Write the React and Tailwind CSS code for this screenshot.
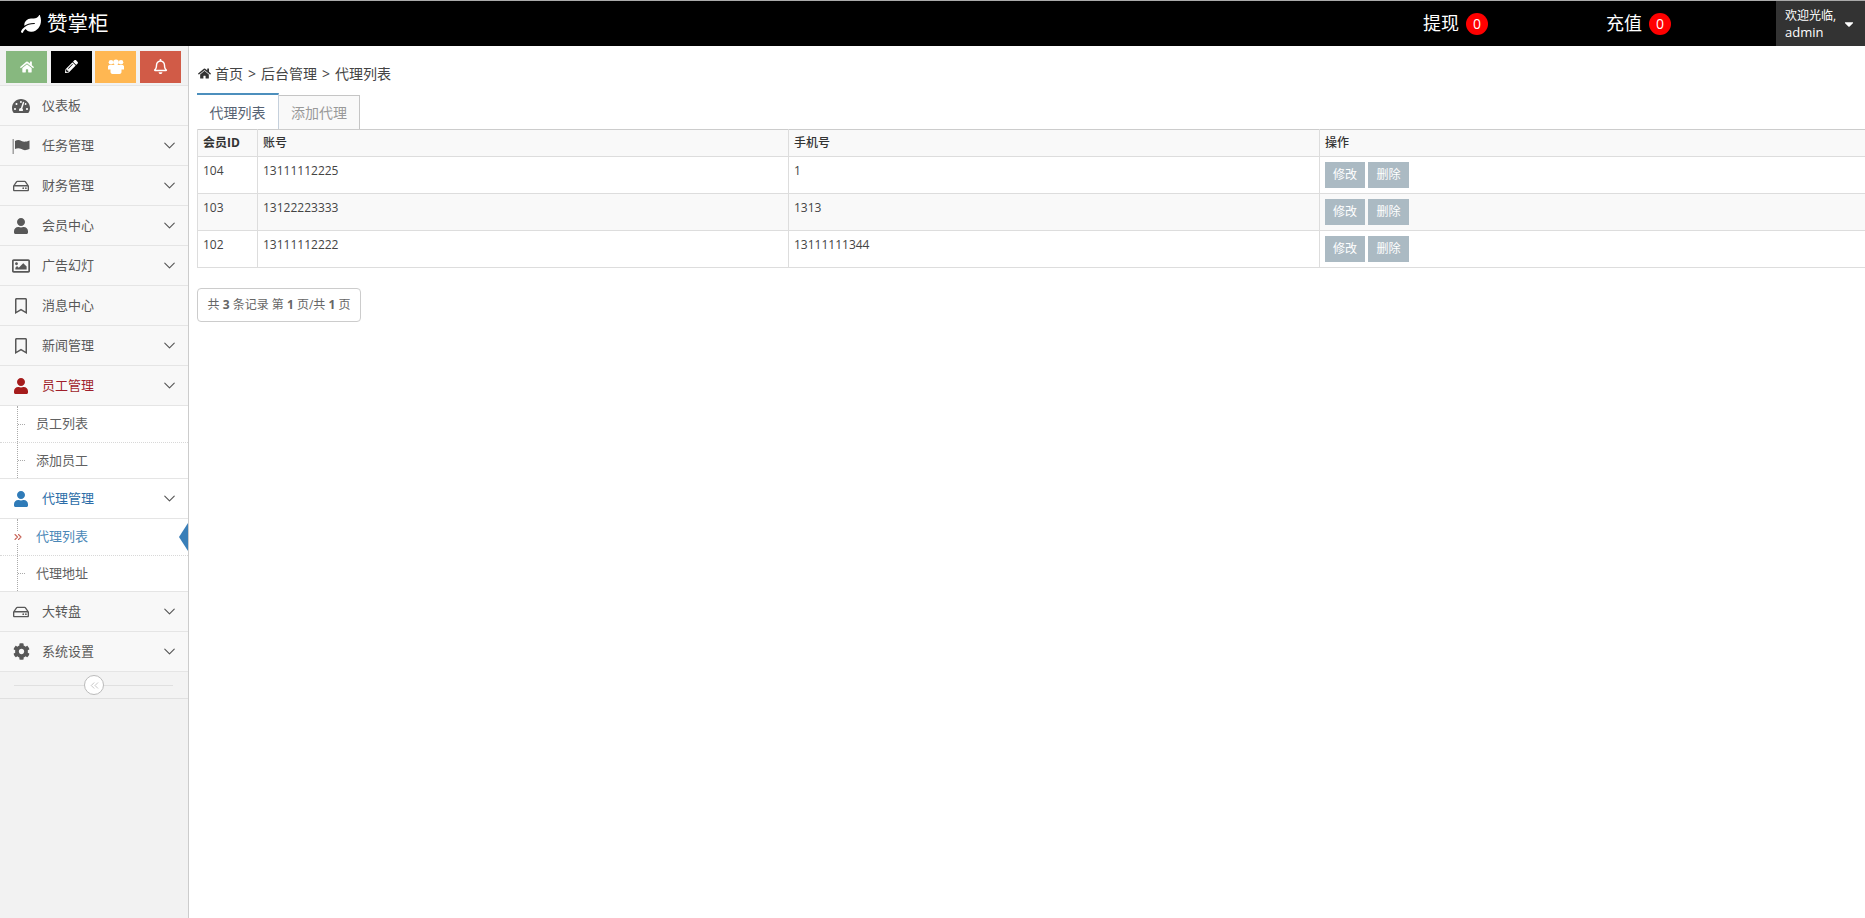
import React from 'react';
import { ChevronDown, ChevronsLeft, ChevronsRight } from 'lucide-react';
import {
  FaLeaf, FaHome, FaPencilAlt, FaRegBell, FaTachometerAlt, FaRegHdd, FaUser,
  FaRegImage, FaRegBookmark, FaCog, FaCaretDown,
} from 'react-icons/fa';

const font = "font-['Open_Sans','Noto_Sans_CJK_SC',sans-serif]";

// the Font Awesome 4 flag and group shapes, the package only has the newer ones
const FlagIcon = () => (
  <svg width="18" height="16" viewBox="0 0 18 16">
    <rect x="0.5" y="1" width="1.4" height="15" fill="#999" />
    <path d="M3 3C5 1.5 7.5 1.5 9.5 3C11.5 4 14 4 17.5 2.5V11C14 12.5 11.5 12.5 9.5 11C7.5 10 5 10 3 11Z" fill="currentColor" />
  </svg>
);

const GroupIcon = () => (
  <svg width="16" height="15" viewBox="0 0 16 15" fill="currentColor">
    <circle cx="3" cy="3.2" r="2.3" />
    <circle cx="13" cy="3.2" r="2.3" />
    <circle cx="8" cy="3.2" r="2.8" />
    <path d="M0 7.5C0 6.5 1 6 2 6H14C15 6 16 6.5 16 7.5V10.5H13.5V13C13.5 14 12.5 15 11.5 15H4.5C3.500 15 2.500 14 2.500 13V10.500H0Z" />
  </svg>
);

const shortcuts = [
  { icon: FaHome, bg: 'bg-[#87b87f]', cls: 'text-[14px]' },
  { icon: FaPencilAlt, bg: 'bg-black', cls: 'text-[13px]' },
  { icon: GroupIcon, bg: 'bg-[#ffb752] -ml-px', cls: '' },
  { icon: FaRegBell, bg: 'bg-[#d15b47]', cls: 'text-[15px]' },
];

const rows = [
  { id: '104', account: '13111112225', phone: '1', striped: false },
  { id: '103', account: '13122223333', phone: '1313', striped: true },
  { id: '102', account: '13111112222', phone: '13111111344', striped: false },
];

const NavRow = ({ icon: Icon, label, arrow = true, tone = 'text-[#585858]', iconTone = 'text-[#585858]', bg = 'bg-[#f8f8f8]', size = 'text-[18px]' }) => (
  <div className={`flex h-[40px] items-center border-b border-[#e5e5e5] ${bg}`}>
    <span className={`flex w-[42px] shrink-0 justify-center ${iconTone} ${size}`}>
      <Icon />
    </span>
    <span className={`flex-1 text-[13px] ${tone}`}>{label}</span>
    {arrow && <ChevronDown size={19} strokeWidth={1.4} className="mr-[9px] text-[#555]" />}
  </div>
);

const SubItem = ({ label, active, last }) => (
  <div className={`relative flex items-center pl-[36px] text-[13px] ${active ? 'text-[#4b88b7]' : 'text-[#616161]'} ${last ? 'h-[35px]' : 'h-[37px] border-b border-dotted border-[#d8d8d8]'}`}>
    {active ? (
      <ChevronsRight size={12} strokeWidth={2.2} className="absolute left-[12px] bg-white text-[#c8665a]" />
    ) : (
      <span className="absolute left-[18px] w-[7px] border-t border-dotted border-[#aaa]" />
    )}
    {label}
    {active && (
      <svg className="absolute right-0 top-[4px]" width="9" height="28" viewBox="0 0 9 28">
        <polygon points="9,0 9,28 0,14" fill="#3a7fb8" />
      </svg>
    )}
  </div>
);

const SubMenu = ({ children }) => (
  <div className="relative border-b border-[#e5e5e5] bg-white">
    <span className="absolute bottom-0 left-[17px] top-0 border-l border-dotted border-[#aaa]" />
    {children}
  </div>
);

const Sidebar = () => (
  <aside className="w-[189px] shrink-0 border-r border-[#ccc] bg-[#f2f2f2]">
    <div className="flex h-[40px] items-center gap-[4px] border-b border-[#e5e5e5] pl-[6px] pt-[2px]">
      {shortcuts.map((s, i) => (
        <div key={i} className={`flex h-[32px] w-[41px] items-center justify-center text-white ${s.bg} ${s.cls}`}>
          <s.icon />
        </div>
      ))}
    </div>
    <NavRow icon={FaTachometerAlt} label="仪表板" arrow={false} />
    <NavRow icon={FlagIcon} label="任务管理" />
    <NavRow icon={FaRegHdd} label="财务管理" size="text-[16px]" />
    <NavRow icon={FaUser} label="会员中心" size="text-[16px]" />
    <NavRow icon={FaRegImage} label="广告幻灯" />
    <NavRow icon={FaRegBookmark} label="消息中心" arrow={false} size="text-[16px]" />
    <NavRow icon={FaRegBookmark} label="新闻管理" size="text-[16px]" />
    <NavRow icon={FaUser} label="员工管理" tone="text-[#a01f2b]" iconTone="text-[#a51c1c]" size="text-[16px]" />
    <SubMenu>
      <SubItem label="员工列表" />
      <SubItem label="添加员工" last />
    </SubMenu>
    <NavRow icon={FaUser} label="代理管理" tone="text-[#2b6da8]" iconTone="text-[#2f7bb8]" bg="bg-white" size="text-[16px]" />
    <SubMenu>
      <SubItem label="代理列表" active />
      <SubItem label="代理地址" last />
    </SubMenu>
    <NavRow icon={FaRegHdd} label="大转盘" size="text-[16px]" />
    <NavRow icon={FaCog} label="系统设置" size="text-[17px]" />
    <div className="relative flex h-[27px] items-center justify-center border-b border-[#e0e0e0] bg-[#f3f3f3]">
      <span className="absolute left-[14px] right-[15px] top-[13px] border-t border-[#e0e0e0]" />
      <span className="relative flex h-[20px] w-[20px] items-center justify-center rounded-full border border-[#bbb] bg-white text-[#aaa]">
        <ChevronsLeft size={13} strokeWidth={1.2} />
      </span>
    </div>
  </aside>
);

const cell = 'border-b border-l border-[#ddd] px-[5px] text-left';

const Content = () => (
  <main className="min-w-0 flex-1 bg-white pl-[8px] pt-[17px]">
    <div className="flex h-[20px] items-center gap-[5px] pl-[1px] text-[14px] text-[#444]">
      <FaHome className="mr-[-1px] text-[13px] text-[#333]" />
      <span>首页</span>
      <span>&gt;</span>
      <span>后台管理</span>
      <span>&gt;</span>
      <span>代理列表</span>
    </div>
    <div className="mt-[10px] flex h-[36px] items-end text-[14px]">
      <div className="flex h-[36px] w-[82px] items-center justify-center border-r border-t-2 border-[#c5d0dc] border-t-[#4c8fbd] bg-white pt-[1px] text-[#576373]">代理列表</div>
      <div className="flex h-[34px] w-[81px] items-center justify-center border-r border-t border-[#c5c5c5] bg-[#f9f9f9] text-[#999]">添加代理</div>
    </div>
    <table className="w-full table-fixed border-collapse border-t border-[#ccc] text-[12px] text-[#444]">
      <colgroup>
        <col className="w-[60px]" />
        <col className="w-[531px]" />
        <col className="w-[531px]" />
        <col />
      </colgroup>
      <thead>
        <tr className="h-[27px] bg-[#f9f9f9] text-[#333]">
          <th className={`${cell} font-bold`}>会员ID</th>
          <th className={`${cell} font-medium`}>账号</th>
          <th className={`${cell} font-medium`}>手机号</th>
          <th className={`${cell} font-medium`}>操作</th>
        </tr>
      </thead>
      <tbody>
        {rows.map((r) => (
          <tr key={r.id} className={`h-[37px] ${r.striped ? 'bg-[#f9f9f9]' : 'bg-white'}`}>
            <td className={`${cell} pt-[5px] align-top`}>{r.id}</td>
            <td className={`${cell} pt-[5px] align-top`}>{r.account}</td>
            <td className={`${cell} pt-[5px] align-top`}>{r.phone}</td>
            <td className={`${cell} pt-[5px] align-top`}>
              <div className="flex gap-[3px]">
                <span className="flex h-[26px] w-[40px] items-center justify-center bg-[#abbac3] text-[12px] text-white">修改</span>
                <span className="flex h-[26px] w-[41px] items-center justify-center bg-[#abbac3] text-[12px] text-white">删除</span>
              </div>
            </td>
          </tr>
        ))}
      </tbody>
    </table>
    <div className="mt-[20px] flex h-[34px] w-[164px] items-center justify-center rounded-[4px] border border-[#ccc] text-[12px] text-[#666]">
      <span>共 <b>3</b> 条记录 第 <b>1</b> 页/共 <b>1</b> 页</span>
    </div>
  </main>
);

const App = () => (
  <div className={`flex h-screen flex-col overflow-hidden bg-white ${font}`}>
    <header className="flex h-[46px] shrink-0 items-center border-t border-[#aaa] bg-black text-white">
      <FaLeaf className="ml-[21px] text-[20px]" />
      <span className="ml-[6px] text-[20.5px] leading-none">赞掌柜</span>
      <div className="ml-auto flex w-[183px] items-center gap-[7px] text-[18px]">
        提现
        <span className="flex h-[22px] w-[22px] items-center justify-center rounded-full bg-[#f00] text-[14px]">0</span>
      </div>
      <div className="flex w-[170px] items-center gap-[7px] text-[18px]">
        充值
        <span className="flex h-[22px] w-[22px] items-center justify-center rounded-full bg-[#f00] text-[14px]">0</span>
      </div>
      <div className="flex h-full w-[89px] items-center bg-[#333] pl-[9px] pr-[9px]">
        <div className="flex-1 text-[12px] leading-[16px]">
          <div>欢迎光临,</div>
          <div className="text-[13px]">admin</div>
        </div>
        <FaCaretDown className="text-[14px]" />
      </div>
    </header>
    <div className="flex min-h-0 flex-1">
      <Sidebar />
      <Content />
    </div>
  </div>
);

export default App;
